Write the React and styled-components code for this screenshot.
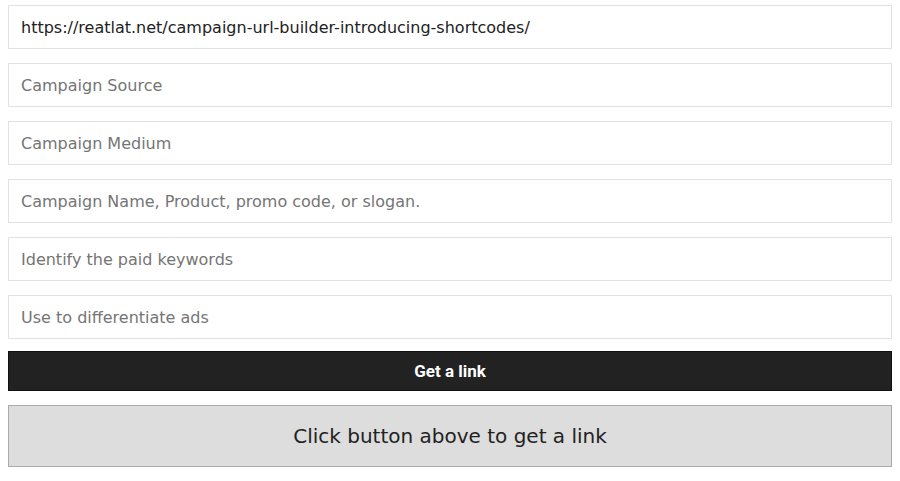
import styled, { createGlobalStyle } from "styled-components";

const GlobalStyle = createGlobalStyle`
  body {
    margin: 5px 8px 8px;
    background: #fff;
    font-family: "DejaVu Sans", Verdana, sans-serif;
  }
`;

// styled Components
const Form = styled.form`
  display: flex;
  flex-direction: column;
  gap: 14px;
`;

const Field = styled.input`
  box-sizing: border-box;
  width: 100%;
  height: 44px;
  margin: 0;
  padding: 0 12px;
  border: 1px solid #e2e2e2;
  border-radius: 0;
  background: #fff;
  color: #222;
  font-family: "DejaVu Sans", Verdana, sans-serif;
  font-size: 16px;
  outline: none;

  &::placeholder {
    color: #757575;
  }
`;

const SubmitButton = styled.button`
  box-sizing: border-box;
  width: 100%;
  height: 40px;
  margin-top: -2px;
  border: 1px solid #111;
  background: #222;
  color: #fff;
  font-family: Roboto, "Liberation Sans", sans-serif;
  font-weight: 700;
  font-size: 17px;
  cursor: pointer;
`;

const Result = styled.div`
  box-sizing: border-box;
  display: flex;
  align-items: center;
  justify-content: center;
  height: 62px;
  border: 1px solid #aaa;
  background: #dddddd;
  color: #222;
  font-size: 20px;
`;

const fields = [
  { value: "https://reatlat.net/campaign-url-builder-introducing-shortcodes/" },
  { placeholder: "Campaign Source" },
  { placeholder: "Campaign Medium" },
  { placeholder: "Campaign Name, Product, promo code, or slogan." },
  { placeholder: "Identify the paid keywords" },
  { placeholder: "Use to differentiate ads" },
];

const App = () => {
  return (
    <>
      <GlobalStyle />
      <Form onSubmit={(e) => e.preventDefault()}>
        {fields.map((f, i) => (
          <Field
            key={i}
            type="text"
            defaultValue={f.value}
            placeholder={f.placeholder}
          />
        ))}
        <SubmitButton type="submit">Get a link</SubmitButton>
        <Result>Click button above to get a link</Result>
      </Form>
    </>
  );
};

export default App;
